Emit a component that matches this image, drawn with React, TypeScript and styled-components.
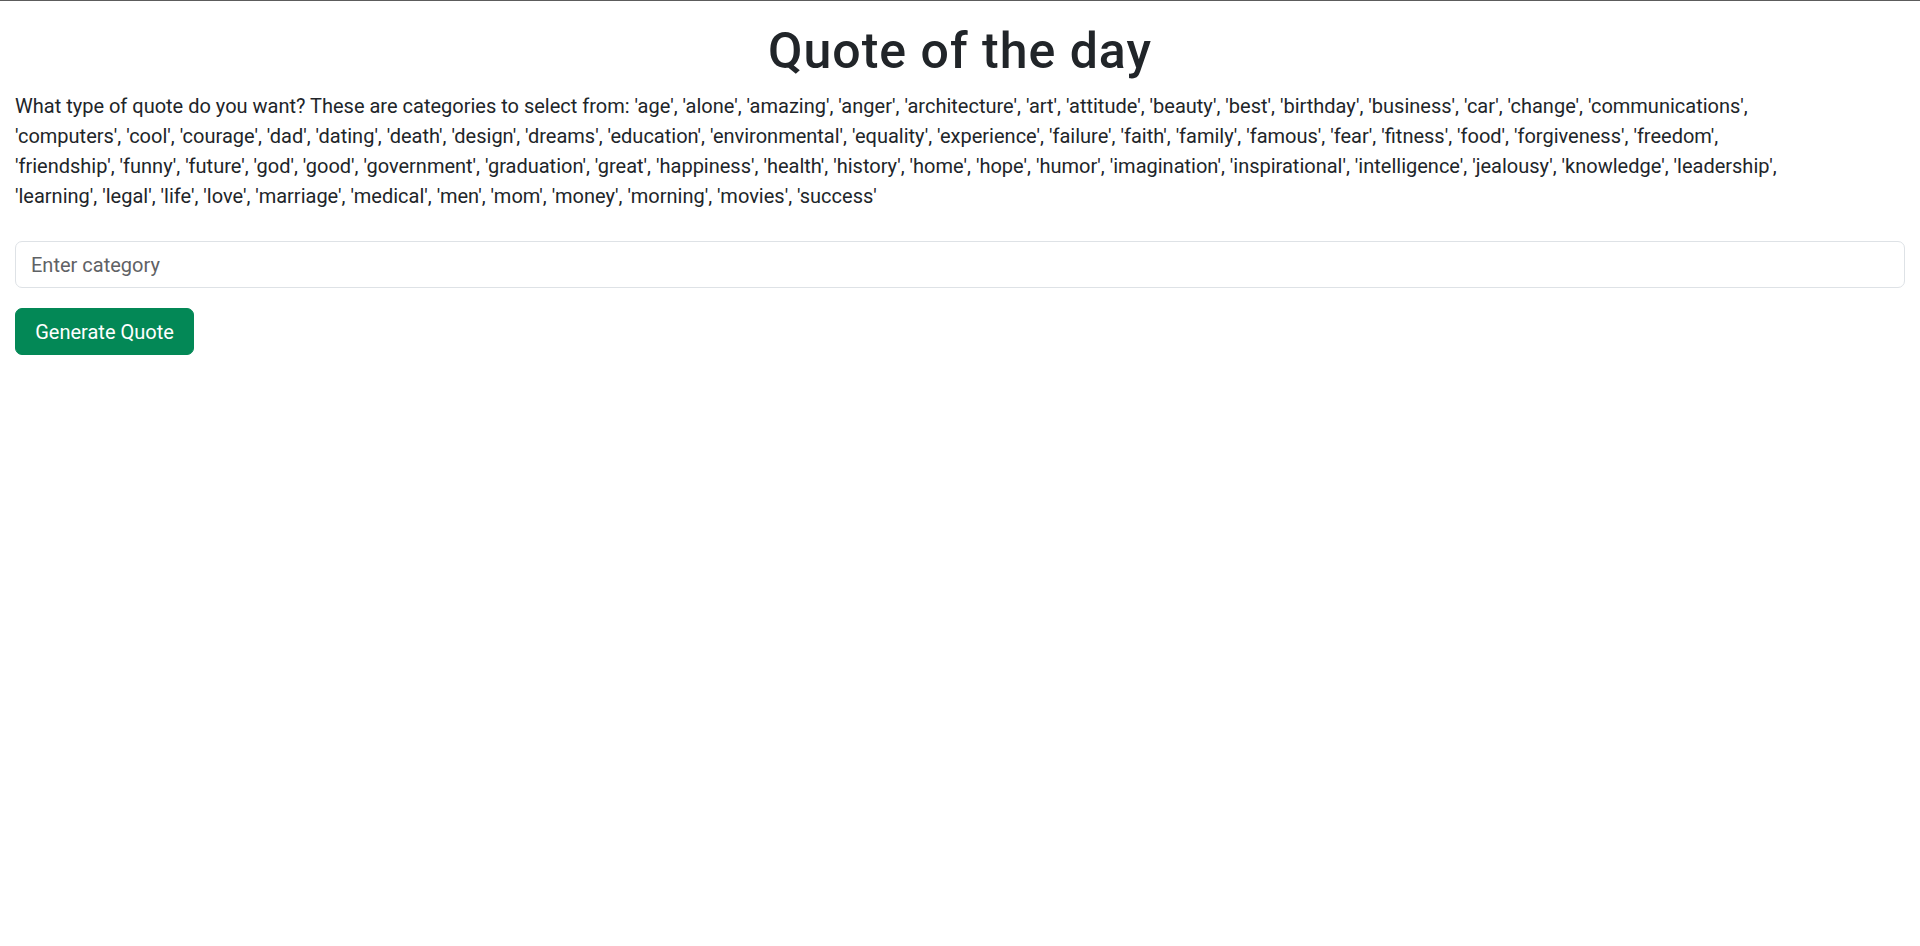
import React from "react";
import styled, { createGlobalStyle } from "styled-components";

const Global = createGlobalStyle`
  html, body { margin: 0; padding: 0; background: #fff; }
  body { font-family: Roboto, "Liberation Sans", sans-serif; color: #212529; }
  * { box-sizing: border-box; }
`;

const Page = styled.div`
  border-top: 1px solid #5c5c5c;
  padding: 20px 15px 0;
  display: flex;
  flex-direction: column;
  align-items: stretch;
`;

const Title = styled.h1`
  margin: 0 0 10px;
  text-align: center;
  font-size: 50px;
  font-weight: 500;
  letter-spacing: 1px;
  line-height: 60px;
`;

const Intro = styled.p`
  margin: 0 0 30px;
  font-size: 20px;
  line-height: 30px;
`;

const Field = styled.input`
  display: block;
  width: 100%;
  height: 47px;
  padding: 0 15px;
  font-family: inherit;
  font-size: 20px;
  color: #212529;
  background: #fff;
  border: 1px solid #dee2e6;
  border-radius: 7px;
  outline: none;
  &::placeholder {
    color: #5f6265;
  }
`;

const Button = styled.button`
  align-self: flex-start;
  margin-top: 20px;
  height: 47px;
  min-width: 179px;
  padding: 0 15px;
  font-family: inherit;
  font-size: 20px;
  color: #fff;
  background: #038856;
  border: 1px solid #038856;
  border-radius: 7px;
  cursor: pointer;
`;

const lines = [
  "What type of quote do you want? These are categories to select from: 'age', 'alone', 'amazing', 'anger', 'architecture', 'art', 'attitude', 'beauty', 'best', 'birthday', 'business', 'car', 'change', 'communications',",
  "'computers', 'cool', 'courage', 'dad', 'dating', 'death', 'design', 'dreams', 'education', 'environmental', 'equality', 'experience', 'failure', 'faith', 'family', 'famous', 'fear', 'fitness', 'food', 'forgiveness', 'freedom',",
  "'friendship', 'funny', 'future', 'god', 'good', 'government', 'graduation', 'great', 'happiness', 'health', 'history', 'home', 'hope', 'humor', 'imagination', 'inspirational', 'intelligence', 'jealousy', 'knowledge', 'leadership',",
  "'learning', 'legal', 'life', 'love', 'marriage', 'medical', 'men', 'mom', 'money', 'morning', 'movies', 'success'",
];

export default function App() {
  return (
    <>
      <Global />
      <Page>
        <Title>Quote of the day</Title>
        <Intro>
          {lines.map((l, i) => (
            <React.Fragment key={i}>
              {l}
              {i < lines.length - 1 && <br />}
            </React.Fragment>
          ))}
        </Intro>
        <Field type="text" placeholder="Enter category" />
        <Button type="button">Generate Quote</Button>
      </Page>
    </>
  );
}
